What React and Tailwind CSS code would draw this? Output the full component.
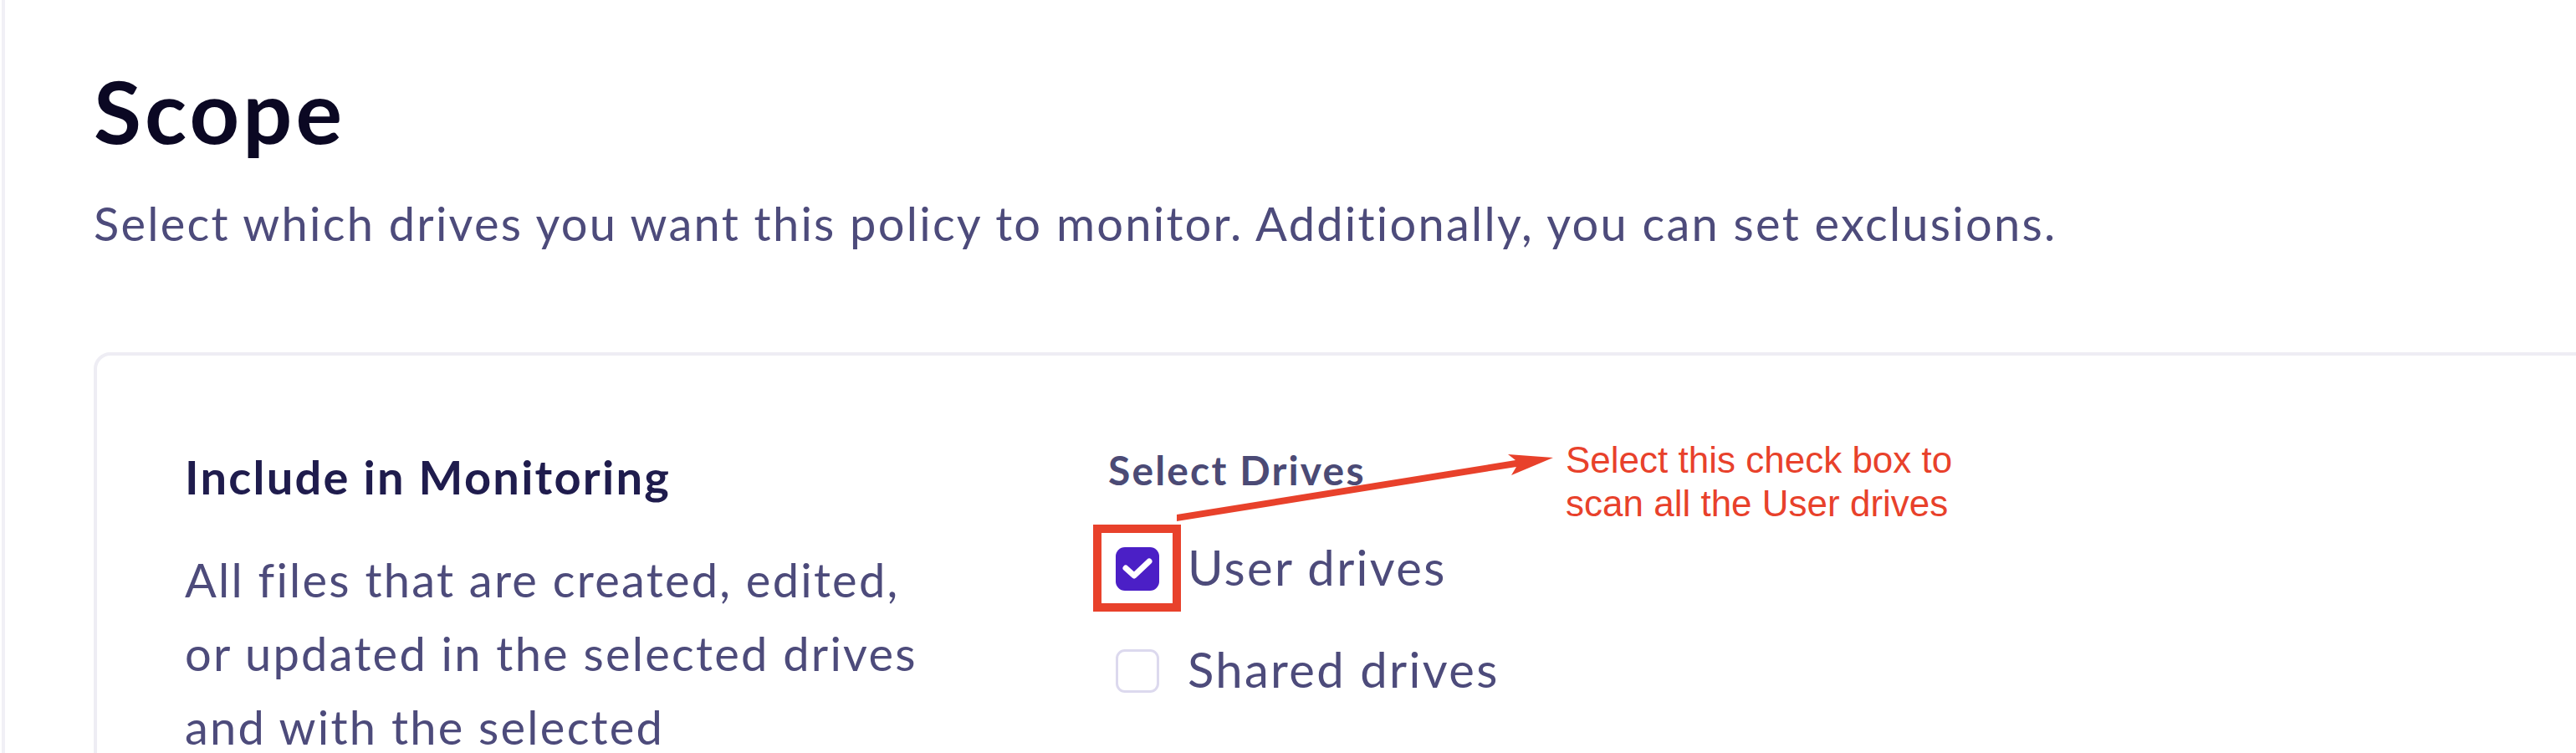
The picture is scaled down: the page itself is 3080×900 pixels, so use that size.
export default function App() {
  return (
    <div className="relative flex h-[900px] w-[3080px] overflow-hidden bg-white font-['Lato','Noto_Sans',sans-serif]">
      <div className="w-[2px] shrink-0 bg-white" />
      <div className="w-[4px] shrink-0 bg-[#f1f0f6]" />
      <main className="flex-1 pl-[106px] pt-[80px]">
        <h1 className="text-[104px] font-bold leading-[104px] tracking-[0.04em] text-[#0b0823]">Scope</h1>
        <p className="mt-[41px] text-[56px] leading-[84px] tracking-[0.04em] text-[#4d4b7b]">
          Select which drives you want this policy to monitor. Additionally, you can set exclusions.
        </p>
        <section className="mt-[112px] -mr-[60px] rounded-tl-[20px] border-4 border-[#eeedf4] pb-[200px] pl-[105px] pt-[103px]">
          <div className="grid grid-cols-[900px_1fr] gap-x-[204px]">
            <div>
              <h2 className="text-[56px] font-bold leading-[84px] tracking-[0.04em] text-[#1f1c4d]">Include in Monitoring</h2>
              <p className="mt-[37px] text-[56px] leading-[88px] tracking-[0.04em] text-[#4d4b7b]">
                All files that are created, edited, or updated in the selected drives and with the selected
              </p>
            </div>
            <div>
              <h3 className="mt-[4px] text-[48px] font-bold leading-[60px] tracking-[0.045em] text-[#4b4a75]">Select Drives</h3>
              <div className="mt-[58px] flex items-center">
                <span className="ml-[9px] flex h-[52px] w-[52px] shrink-0 items-center justify-center rounded-[11px] bg-[#4b1fc6]">
                  <svg width="52" height="52" viewBox="0 0 52 52">
                    <path d="M12 25 L22 34 L40 17" fill="none" stroke="#ffffff" strokeWidth="7" strokeLinecap="round" strokeLinejoin="round" />
                  </svg>
                </span>
                <span className="ml-[34px] pb-[3px] text-[58px] leading-[56px] tracking-[0.04em] text-[#4d4b7b]">User drives</span>
              </div>
              <div className="mt-[63px] flex items-center">
                <span className="ml-[9px] h-[52px] w-[52px] shrink-0 rounded-[11px] border-[3px] border-[#dcd9ee] bg-white" />
                <span className="ml-[34px] pb-[3px] text-[58px] leading-[56px] tracking-[0.04em] text-[#4d4b7b]">Shared drives</span>
              </div>
            </div>
          </div>
        </section>
      </main>

      <div className="pointer-events-none absolute left-[1307px] top-[627px] h-[104px] w-[105px] border-[10px] border-[#e8412b]" />
      <svg className="pointer-events-none absolute left-0 top-0" width="3080" height="900" viewBox="0 0 3080 900">
        <polygon
          points="1407,615 1812,550 1803,543 1857,547 1807,568 1813,558 1407,623"
          fill="#e8412b"
        />
      </svg>
      <div className="pointer-events-none absolute left-[1872px] top-[524px] font-['Liberation_Sans',Arial,sans-serif] text-[44px] leading-[52px] text-[#e8412b]">
        Select this check box to
        <br />
        scan all the User drives
      </div>
    </div>
  );
}
